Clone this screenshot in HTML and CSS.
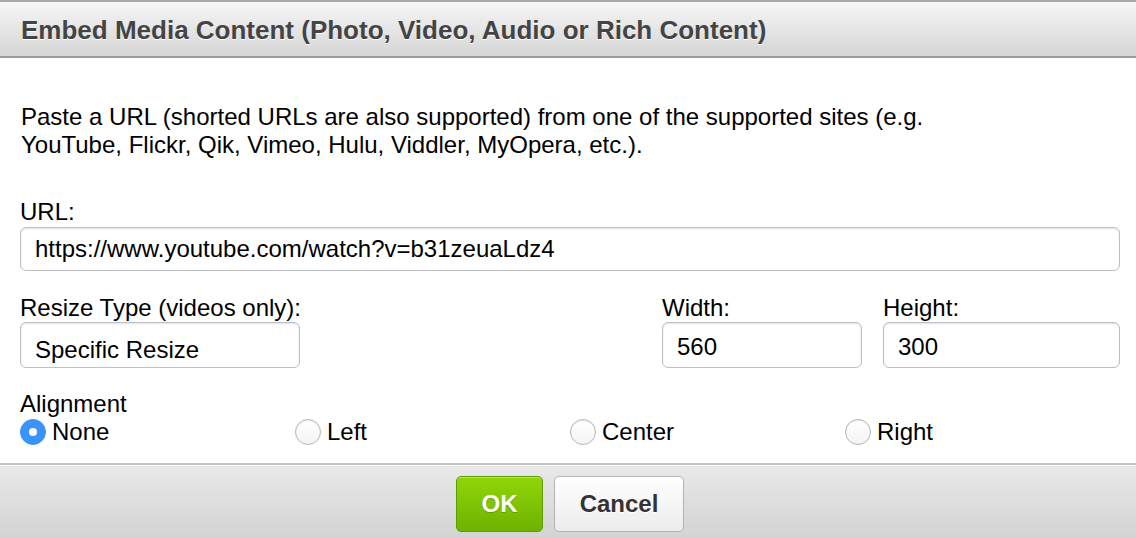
FILE: index.html
```html
<!DOCTYPE html>
<html>
<head>
<meta charset="utf-8">
<link rel="stylesheet" href="styles.css">
</head>
<body>
<div class="dialog">
  <div class="header">Embed Media Content (Photo, Video, Audio or Rich Content)</div>
  <div class="content">
    <p class="intro">Paste a URL (shorted URLs are also supported) from one of the supported sites (e.g.<br>YouTube, Flickr, Qik, Vimeo, Hulu, Viddler, MyOpera, etc.).</p>
    <div class="field url-field">
      <label class="label">URL:</label>
      <div class="input url-input">https://www.youtube.com/watch?v=b31zeuaLdz4</div>
    </div>
    <div class="size-row">
      <div class="field grow">
        <label class="label">Resize Type (videos only):</label>
        <div class="input resize-input">Specific Resize</div>
      </div>
      <div class="field width-field">
        <label class="label">Width:</label>
        <div class="input">560</div>
      </div>
      <div class="field height-field">
        <label class="label">Height:</label>
        <div class="input">300</div>
      </div>
    </div>
    <div class="align">
      <div class="label align-label">Alignment</div>
      <div class="radios">
        <div class="radio-item"><span class="radio checked"></span><span>None</span></div>
        <div class="radio-item"><span class="radio"></span><span>Left</span></div>
        <div class="radio-item"><span class="radio"></span><span>Center</span></div>
        <div class="radio-item"><span class="radio"></span><span>Right</span></div>
      </div>
    </div>
  </div>
  <div class="footer">
    <button class="btn ok">OK</button>
    <button class="btn cancel">Cancel</button>
  </div>
</div>
</body>
</html>
```
FILE: styles.css
```css
* { box-sizing: border-box; }
html, body { margin: 0; padding: 0; background: #fff; }
body {
  font-family: "Liberation Sans", Arial, Helvetica, sans-serif;
  color: #000;
  width: 1136px;
  height: 538px;
  overflow: hidden;
}
.dialog { display: flex; flex-direction: column; height: 538px; }
.header {
  height: 58px;
  border-top: 2px solid #a8a8a8;
  border-bottom: 2px solid #9c9c9c;
  background: linear-gradient(#f6f6f6, #d5d5d5);
  font-weight: bold;
  font-size: 26px;
  line-height: 30px;
  color: #444;
  text-shadow: 0 1px 0 #fff;
  padding: 13px 0 0 21px;
  flex: none;
}
.content {
  flex: 1;
  padding: 0 17px 0 20px;
}
.intro {
  margin: 45px 0 0 1px;
  font-size: 24px;
  line-height: 28px;
}
.field { display: flex; flex-direction: column; }
.label { font-size: 24px; line-height: 24px; }
.url-field { margin-top: 41px; }
.url-field .label { margin-bottom: 3px; }
.input {
  border: 1px solid #bcc0c4;
  border-radius: 6px;
  box-shadow: inset 0 1px 2px rgba(0,0,0,0.12);
  background: #fff;
  font-size: 24px;
  height: 46px;
  padding: 0 0 0 14px;
  display: flex;
  align-items: center;
}
.url-input { height: 44px; width: 1100px; padding-bottom: 1px; }
.size-row {
  display: flex;
  gap: 21px;
  margin-top: 25px;
  width: 1100px;
}
.size-row .label { margin-bottom: 2px; }
.grow { flex: 1; }
.resize-input { width: 280px; padding-top: 10px; }
.width-field { width: 200px; }
.width-field .input, .height-field .input { padding-top: 3px; }
.height-field { width: 237px; }
.align { margin-top: 24px; }
.align-label { line-height: 24px; }
.radios {
  display: grid;
  grid-template-columns: repeat(4, 1fr);
  width: 1100px;
  margin-top: 2px;
}
.radio-item {
  display: flex;
  align-items: center;
  gap: 6px;
  font-size: 24px;
  height: 28px;
}
.radio {
  width: 26px;
  height: 26px;
  border-radius: 50%;
  border: 1px solid #b5b5b5;
  background: linear-gradient(#fff, #f4f4f4);
  box-shadow: inset 0 1px 1px rgba(0,0,0,0.08);
  display: flex;
  align-items: center;
  justify-content: center;
  flex: none;
}
.radio.checked {
  background: #3a93f8;
  border-color: #3a93f8;
  box-shadow: none;
}
.radio.checked::after {
  content: "";
  width: 8px;
  height: 8px;
  border-radius: 50%;
  background: #fff;
}
.footer {
  flex: none;
  height: 75px;
  border-top: 2px solid #c4c4c4;
  box-shadow: inset 0 1px 0 #fff;
  background: linear-gradient(#e9e9e9, #d3d3d3);
  display: flex;
  justify-content: center;
  align-items: flex-start;
  gap: 11px;
  padding-top: 11px;
  padding-left: 4px;
}
.btn {
  font-family: "Liberation Sans", Arial, Helvetica, sans-serif;
  font-weight: bold;
  font-size: 24px;
  height: 56px;
  border-radius: 5px;
  cursor: pointer;
  padding: 0;
}
.ok {
  width: 87px;
  color: #fff;
  background: linear-gradient(#92d50a, #6db300);
  border: 1px solid #5c9c05;
  box-shadow: inset 0 1px 0 #b3e64d;
  text-shadow: 0 1px 1px rgba(0,0,0,0.2);
}
.cancel {
  width: 130px;
  color: #333;
  background: linear-gradient(#ffffff, #ececec);
  border: 1px solid #b3b3b3;
  text-shadow: 0 1px 0 #fff;
}
```
